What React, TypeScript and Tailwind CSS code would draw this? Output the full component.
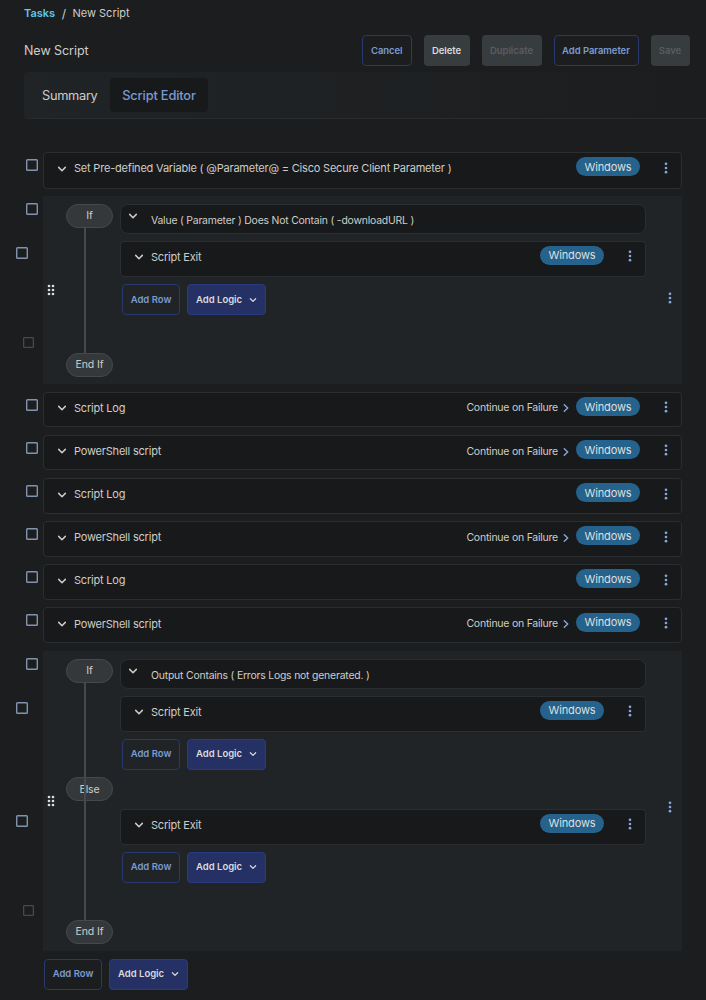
import type { ReactNode } from 'react';

function Chevron({ className = 'size-[10px]', right = false }: { className?: string; right?: boolean }) {
  return (
    <svg
      viewBox="0 0 10 10"
      className={`shrink-0 ${className}`}
      fill="none"
      stroke="currentColor"
      strokeWidth="1.5"
      strokeLinecap="round"
      strokeLinejoin="round"
    >
      <path d={right ? 'M3.3 1.8 6.7 5 3.3 8.2' : 'M1.7 3.4 5 6.7 8.3 3.4'} />
    </svg>
  );
}

function Kebab({ className = '' }: { className?: string }) {
  return (
    <svg viewBox="0 0 4 12" className={`h-[12px] w-[4px] shrink-0 text-[#86a5db] ${className}`} fill="currentColor">
      <circle cx="2" cy="1.8" r="1.35" />
      <circle cx="2" cy="6" r="1.35" />
      <circle cx="2" cy="10.2" r="1.35" />
    </svg>
  );
}

function Handle() {
  return (
    <svg viewBox="0 0 8 12" className="h-[12px] w-[8px] shrink-0 text-[#deddd9]" fill="currentColor">
      {[2, 6, 10].map((y) => (
        <g key={y}>
          <circle cx="2" cy={y} r="1.35" />
          <circle cx="6" cy={y} r="1.35" />
        </g>
      ))}
    </svg>
  );
}

function Check({ className = '', disabled = false }: { className?: string; disabled?: boolean }) {
  return (
    <svg
      viewBox="0 0 12 12"
      className={`shrink-0 ${disabled ? 'size-[11px] text-[#47494b]' : 'size-[12px] text-[#8293ae]'} ${className}`}
      fill="none"
      stroke="currentColor"
      strokeWidth="1.4"
    >
      <rect x="0.7" y="0.7" width="10.6" height="10.6" rx="0.8" />
    </svg>
  );
}

function Badge({ className = '' }: { className?: string }) {
  return (
    <span
      className={`flex h-[19px] w-[64px] shrink-0 items-center justify-center rounded-full bg-[#25638d] text-[11px] tracking-[-0.15px] text-[#dedfde] ${className}`}
    >
      Windows
    </span>
  );
}

function Step({ title, fail = false }: { title: string; fail?: boolean }) {
  return (
    <div className="flex min-w-0 flex-1 items-start rounded-[4px] border border-[#2b2e30] bg-[#18191b] pl-[13px] pr-[13px] text-[11px] leading-[16px] tracking-[-0.2px]">
      <Chevron className="mt-[10.5px] size-[10px]" />
      <span className="ml-[7px] mt-[7.2px] flex-1 whitespace-nowrap">{title}</span>
      {fail && (
        <span className="mr-[5px] mt-[7.6px] flex items-center gap-[3px] whitespace-nowrap text-[10.5px] tracking-[-0.24px]">
          Continue on Failure
          <Chevron right className="size-[10px] text-[#86a5db]" />
        </span>
      )}
      <Badge className="mt-[4.2px]" />
      <Kebab className="ml-[24px] mt-[8.5px]" />
    </div>
  );
}

function Row({ title, fail, className = 'h-[35.5px]' }: { title: string; fail?: boolean; className?: string }) {
  return (
    <div className={`flex ${className}`}>
      <div className="w-[43px] shrink-0 pl-[26px] pt-[6.8px]">
        <Check />
      </div>
      <Step title={title} fail={fail} />
    </div>
  );
}

function Actions({ className = '' }: { className?: string }) {
  return (
    <div className={`flex gap-[7px] text-[9.5px] font-semibold ${className}`}>
      <button className="h-[31px] w-[58px] rounded-[4px] border border-[#29386f] text-[#7b9bd2]">Add Row</button>
      <button className="flex h-[31px] w-[79px] items-center justify-between rounded-[4px] border border-[#2b3b80] bg-[#253165] pl-[8px] pr-[8px] text-[#dcdbd8]">
        Add Logic
        <Chevron className="size-[8px]" />
      </button>
    </div>
  );
}

function Pill({ children }: { children: ReactNode }) {
  return (
    <span className="flex h-[24px] w-[47px] shrink-0 items-center justify-center rounded-full border border-[#45494c] bg-[#34383b] pt-px text-[10.5px] tracking-[-0.1px]">
      {children}
    </span>
  );
}

function Condition({ children }: { children: ReactNode }) {
  return (
    <div className="flex h-[30px] items-start rounded-[8px] border border-[#2b2e30] bg-[#18191b] pl-[6.5px]">
      <Chevron className="mt-[6px] size-[10px]" />
      <span className="ml-[13.5px] mt-[8px] whitespace-nowrap text-[10.4px] leading-[16px] tracking-[-0.19px]">
        {children}
      </span>
    </div>
  );
}

function Block({
  gutter,
  pills,
  className,
  menuClassName,
  children,
}: {
  gutter: ReactNode;
  pills: ReactNode;
  className: string;
  menuClassName: string;
  children: ReactNode;
}) {
  return (
    <div className={`flex ${className}`}>
      <div className="flex w-[43px] shrink-0 flex-col pt-[6.5px]">{gutter}</div>
      <div className="flex flex-1 bg-[#202426]">
        <div className="flex w-[23px] shrink-0 items-center pl-[3.5px]">
          <Handle />
        </div>
        <div className="relative flex w-[54px] shrink-0 flex-col justify-between pb-[7.5px] pt-[7.5px]">
          {pills}
          <span className="absolute bottom-[31px] left-[18px] top-[31px] w-[2px] bg-[#45494c]" />
        </div>
        <div className="flex w-[526px] shrink-0 flex-col pt-[7.5px]">{children}</div>
        <div className={`flex flex-1 items-center pl-[22px] ${menuClassName}`}>
          <Kebab />
        </div>
      </div>
    </div>
  );
}

export default function App() {
  return (
    <div className="h-[1000px] w-[706px] overflow-hidden bg-[#1c1d1f] font-['Inter',sans-serif] text-[#cfcdc8]">
      <nav className="flex h-[27px] items-center gap-[6.5px] pl-[24px] text-[11px]">
        <span className="font-semibold text-[#5cc8ea]">Tasks</span>
        <span className="text-[12px]">/</span>
        <span>New Script</span>
      </nav>
      <header className="mt-[8px] flex h-[31px] items-center justify-between pl-[24px] pr-[16.5px]">
        <h1 className="pt-[2px] text-[12.5px] tracking-[-0.05px]">New Script</h1>
        <div className="flex gap-[12px] text-[9.5px] font-semibold tracking-[-0.05px]">
          <button className="h-[31px] w-[49.5px] rounded-[4px] border border-[#29386f] pt-px text-[#7b9bd2]">Cancel</button>
          <button className="h-[31px] w-[46px] rounded-[4px] bg-[#373c3e] pt-px text-[#dcdbd8]">Delete</button>
          <button className="h-[31px] w-[60px] rounded-[4px] bg-[#373c3e] pt-px text-[#5a5d5f]">Duplicate</button>
          <button className="h-[31px] w-[85px] rounded-[4px] border border-[#29386f] pt-px text-[#7b9bd2]">
            Add Parameter
          </button>
          <button className="h-[31px] w-[39px] rounded-[4px] bg-[#373c3e] pt-px text-[#5a5d5f]">Save</button>
        </div>
      </header>
      <div className="ml-[24px] mt-[6px] flex h-[47px] items-center rounded-l-[4px] border-b border-[#292b2d] bg-gradient-to-r from-[#202426] to-[#1c1d1f] pl-[18px] text-[12.8px]">
        <span className="w-[68px] pt-px tracking-[-0.3px]">Summary</span>
        <span className="flex h-[34px] w-[98px] items-center justify-center rounded-[4px] bg-[#18191b] pt-px font-medium tracking-[-0.15px] text-[#7b9bd2]">
          Script Editor
        </span>
      </div>

      <main className="mt-[33.3px] flex flex-col gap-[7.6px] pr-[24px]">
        <Row title="Set Pre-defined Variable ( @Parameter@ = Cisco Secure Client Parameter )" className="h-[36.4px]" />
        <Block
          className="h-[188px]"
          menuClassName="pt-[15px]"
          gutter={
            <>
              <Check className="ml-[26px]" />
              <Check className="ml-[16px] mt-[32.5px]" />
              <Check disabled className="ml-[23px] mt-[78px]" />
            </>
          }
          pills={
            <>
              <Pill>If</Pill>
              <Pill>End If</Pill>
            </>
          }
        >
          <Condition>Value ( Parameter ) Does Not Contain ( -downloadURL )</Condition>
          <div className="mt-[7px] flex h-[36px]">
            <Step title="Script Exit" />
          </div>
          <Actions className="ml-[2px] mt-[7.5px]" />
        </Block>
        <Row title="Script Log" fail />
        <Row title="PowerShell script" fail />
        <Row title="Script Log" />
        <Row title="PowerShell script" fail />
        <Row title="Script Log" />
        <Row title="PowerShell script" fail />
        <Block
          className="mt-[0.6px] h-[300.3px]"
          menuClassName="pt-[11px]"
          gutter={
            <>
              <Check className="ml-[26px]" />
              <Check className="ml-[16px] mt-[32.5px]" />
              <Check className="ml-[16px] mt-[101px]" />
              <Check disabled className="ml-[23px] mt-[78px]" />
            </>
          }
          pills={
            <>
              <Pill>If</Pill>
              <div className="mb-[24px]">
                <Pill>Else</Pill>
              </div>
              <Pill>End If</Pill>
            </>
          }
        >
          <Condition>Output Contains ( Errors Logs not generated. )</Condition>
          <div className="mt-[7px] flex h-[36px]">
            <Step title="Script Exit" />
          </div>
          <Actions className="ml-[2px] mt-[7px]" />
          <div className="mt-[39px] flex h-[36px]">
            <Step title="Script Exit" />
          </div>
          <Actions className="ml-[2px] mt-[7px]" />
        </Block>
        <Actions className="ml-[44px]" />
      </main>
    </div>
  );
}
